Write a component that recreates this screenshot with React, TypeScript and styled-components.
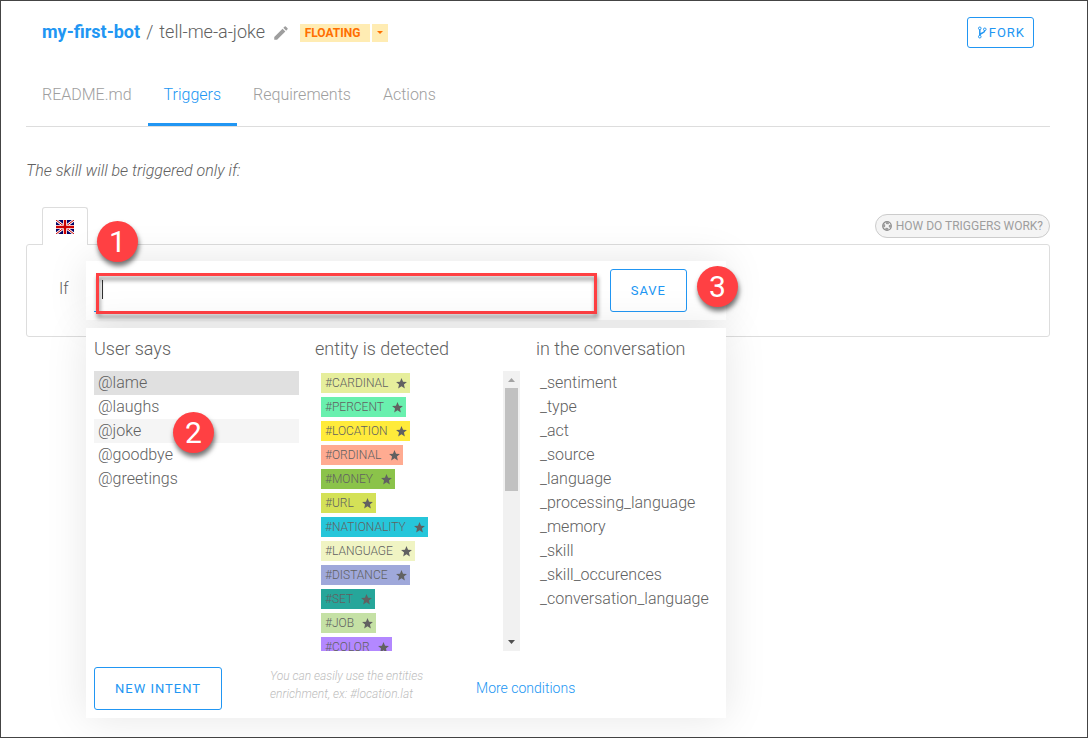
import React from "react";
import styled, { createGlobalStyle } from "styled-components";

const BLUE = "#2196f3";

const GlobalStyle = createGlobalStyle`
  *, *::before, *::after { box-sizing: border-box; }
  body {
    margin: 0;
    background: #fff;
    color: #616161;
    font-family: Roboto, "Liberation Sans", sans-serif;
    font-size: 16px;
    font-weight: 300;
  }
  button, input { font: inherit; color: inherit; }
  button { cursor: pointer; }
  h1, h2, p, ul { margin: 0; padding: 0; }
  ul { list-style: none; }
  a { text-decoration: none; }
`;

const Frame = styled.div`
  min-height: 100vh;
  padding: 16px 37px 18px 25px;
  border: 1px solid #444;
`;

const Header = styled.header`
  display: flex;
  justify-content: space-between;
  align-items: center;
  padding: 0 16px;
`;

const TitleGroup = styled.div`
  display: flex;
  align-items: center;
`;

const Title = styled.h1`
  display: flex;
  gap: 6px;
  margin-bottom: 2px;
  font-size: 18px;
  line-height: 22px;
  font-weight: 300;
`;

const BotLink = styled.a`
  color: ${BLUE};
  font-weight: 700;
`;

const IconButton = styled.button`
  display: flex;
  padding: 0;
  margin: 0 10px 0 7px;
  border: 0;
  background: none;
  color: #9e9e9e;
`;

const Status = styled.div`
  display: flex;
  gap: 2px;
`;

const StatusPart = styled.button<{ $caret?: boolean }>`
  display: flex;
  align-items: center;
  justify-content: center;
  width: ${(p) => (p.$caret ? "16px" : "70px")};
  height: 18px;
  padding: ${(p) => (p.$caret ? "0" : "0 5px 0 0")};
  border: 0;
  background: #ffecb3;
  color: #ff6f00;
  font-size: 12px;
  font-weight: 700;
`;

const OutlineButton = styled.button<{ $small?: boolean }>`
  display: flex;
  align-items: center;
  height: ${(p) => (p.$small ? "31px" : "43px")};
  padding: ${(p) => (p.$small ? "0 8px 0 9px" : "0 20px")};
  border: 1px solid ${BLUE};
  border-radius: 3px;
  background: #fff;
  color: ${BLUE};
  font-size: 13px;
  font-weight: 400;
  letter-spacing: 1px;
  white-space: nowrap;
`;

const Tabs = styled.nav`
  display: flex;
  margin-top: 18px;
  border-bottom: 1px solid #ddd;
`;

const Tab = styled.a<{ $active?: boolean }>`
  padding: 0 16px;
  border-bottom: 3px solid ${(p) => (p.$active ? BLUE : "transparent")};
  color: ${(p) => (p.$active ? BLUE : "#9e9e9e")};
  line-height: 57px;
`;

const Intro = styled.p`
  margin-top: 33px;
  font-style: italic;
  line-height: 22px;
`;

const PanelTop = styled.div`
  display: flex;
  justify-content: space-between;
  height: 37px;
  margin-top: 25px;
  padding-left: 16px;
`;

const LanguageTab = styled.button`
  position: relative;
  z-index: 1;
  display: flex;
  align-items: center;
  justify-content: center;
  width: 46px;
  height: 38px;
  padding: 0;
  border: 1px solid #ddd;
  border-bottom: 0;
  border-radius: 3px 3px 0 0;
  background: #fff;
`;

const HelpButton = styled.button`
  display: flex;
  align-items: center;
  gap: 4px;
  height: 24px;
  margin-top: 7px;
  padding: 0 6px;
  border: 1px solid #ccc;
  border-radius: 12px;
  background: #f4f4f4;
  color: #9e9e9e;
  font-size: 12px;
  font-weight: 400;
`;

const Panel = styled.section`
  position: relative;
  min-height: 93px;
  padding: 34px 32px;
  border: 1px solid #ddd;
  border-radius: 3px;
  line-height: 20px;
`;

const Editor = styled.div`
  position: absolute;
  z-index: 2;
  top: 16px;
  left: 59px;
  width: 640px;
  display: flex;
  flex-direction: column;
  gap: 8px;
`;

const SearchBar = styled.form`
  display: flex;
  gap: 16px;
  padding: 8px 39px 8px 8px;
  background: #fff;
  box-shadow: 0 0 40px rgba(0, 0, 0, 0.1);
`;

const Field = styled.div`
  position: relative;
  flex: 1;
  display: flex;
`;

const ConditionInput = styled.input`
  flex: 1;
  min-width: 0;
  padding: 0 8px;
  border: 0;
  border-bottom: 1px solid ${BLUE};
  outline: 0;
  background: transparent;
`;

const Caret = styled.span`
  position: absolute;
  left: 8px;
  top: 11px;
  width: 1px;
  height: 19px;
  background: #333;
`;

const Highlight = styled.div`
  position: absolute;
  inset: 4px -3px -2px 2px;
  border: 3px solid #ff4043;
  filter: drop-shadow(1px 4px 2px rgba(0, 0, 0, 0.45));
  pointer-events: none;
`;

const Suggestions = styled.div`
  position: relative;
  padding: 8px;
  background: #fff;
  box-shadow: 0 0 40px rgba(0, 0, 0, 0.1);
`;

const Columns = styled.div`
  display: grid;
  grid-template-columns: 205px 205px 1fr;
  gap: 16px;
`;

const ColumnTitle = styled.h2`
  margin-bottom: 9px;
  font-size: 18px;
  font-weight: 300;
  line-height: 26px;
`;

const Item = styled.li<{ $tone?: string }>`
  padding: 0 4px;
  background: ${(p) => p.$tone || "transparent"};
  line-height: 24px;
`;

const EntityBox = styled.div`
  display: flex;
  justify-content: space-between;
  height: 280px;
`;

const EntityList = styled.ul`
  display: flex;
  flex-direction: column;
  align-items: flex-start;
  gap: 4px;
  flex: 1;
  padding: 2px 6px 0;
  overflow: hidden;
`;

const Entity = styled.li<{ $color: string }>`
  flex: none;
  display: flex;
  align-items: center;
  gap: 7px;
  height: 20px;
  padding: 0 2px 0 4px;
  background: ${(p) => p.$color};
  font-size: 12px;
`;

const ScrollTrack = styled.div`
  display: flex;
  flex-direction: column;
  justify-content: space-between;
  align-items: center;
  width: 17px;
  background: #f1f1f1;
`;

const ScrollTop = styled.div`
  display: flex;
  flex-direction: column;
  align-items: center;
`;

const ScrollArrow = styled.svg`
  display: block;
  width: 17px;
  height: 17px;
`;

const Thumb = styled.div`
  width: 13px;
  height: 103px;
  background: #c1c1c1;
`;

const Footer = styled.footer`
  display: flex;
  align-items: flex-start;
  gap: 48px;
  margin-top: 16px;
`;

const Hint = styled.p`
  width: 158px;
  color: #bdbdbd;
  font-size: 12px;
  font-style: italic;
  line-height: 18px;
`;

const MoreLink = styled.a`
  color: ${BLUE};
  font-size: 14px;
  line-height: 42px;
`;

const Marker = styled.span<{ $x: number; $y: number }>`
  position: absolute;
  left: ${(p) => p.$x}px;
  top: ${(p) => p.$y}px;
  display: flex;
  align-items: center;
  justify-content: center;
  width: 41px;
  height: 41px;
  border-radius: 50%;
  background: #ff4043;
  box-shadow: 1px 4px 5px rgba(0, 0, 0, 0.55);
  color: #fff;
  font-size: 30px;
  font-weight: 400;
`;

const Pencil = () => (
  <svg width="18" height="18" viewBox="0 0 24 24" fill="currentColor" aria-hidden="true">
    <path d="M3 17.25V21h3.75L17.81 9.94l-3.75-3.75L3 17.25zM20.71 7.04a1 1 0 0 0 0-1.41l-2.34-2.34a1 1 0 0 0-1.41 0l-1.83 1.83 3.75 3.75 1.83-1.83z" />
  </svg>
);

const ForkIcon = () => (
  <svg width="12" height="13" viewBox="0 0 12 13" fill="none" stroke="currentColor" aria-hidden="true">
    <circle cx="2.8" cy="2.3" r="1.3" />
    <circle cx="2.8" cy="10.7" r="1.3" />
    <circle cx="7.8" cy="3.3" r="1.3" />
    <path d="M2.8 3.6v5.8M7.8 4.6c0 3-4.3 1.8-5 4.4" strokeWidth="1.5" />
  </svg>
);

const HelpIcon = () => (
  <svg width="10" height="10" viewBox="0 0 10 10" aria-hidden="true">
    <circle cx="5" cy="5" r="4.3" fill="none" stroke="#8c8c8c" strokeWidth="1.2" />
    <circle cx="5" cy="5" r="2.9" fill="none" stroke="#9a9a9a" strokeWidth="2" strokeDasharray="3.1 1.455" strokeDashoffset="1.55" />
  </svg>
);

const Flag = () => (
  <svg width="18" height="14" viewBox="0 0 18 14" role="img" aria-label="English">
    <path fill="#006" d="M0 0h18v14H0z" />
    <path d="M0 0l18 14M18 0L0 14" stroke="#fff" strokeWidth="2.6" />
    <path d="M0 0l18 14M18 0L0 14" stroke="#c00" strokeWidth="1" />
    <path d="M9 0v14M0 7h18" stroke="#fff" strokeWidth="4" />
    <path d="M9 0v14M0 7h18" stroke="#c00" strokeWidth="2.4" />
  </svg>
);

const Star = () => (
  <svg width="13" height="13" viewBox="0 0 24 24" fill="#616161" aria-hidden="true">
    <path d="M12 17.27L18.18 21l-1.64-7.03L22 9.24l-7.19-.61L12 2 9.19 8.63 2 9.24l5.46 4.73L5.82 21z" />
  </svg>
);

const tabs = ["README.md", "Triggers", "Requirements", "Actions"];

const intents = [
  { name: "@lame", tone: "#e0e0e0" },
  { name: "@laughs" },
  { name: "@joke", tone: "#f5f5f5" },
  { name: "@goodbye" },
  { name: "@greetings" },
];

const entities = [
  ["#CARDINAL", "#e6ee9c"],
  ["#PERCENT", "#69f0ae"],
  ["#LOCATION", "#ffeb3b"],
  ["#ORDINAL", "#ffab91"],
  ["#MONEY", "#8bc34a"],
  ["#URL", "#d4e157"],
  ["#NATIONALITY", "#26c6da"],
  ["#LANGUAGE", "#f0f4c3"],
  ["#DISTANCE", "#9fa8da"],
  ["#SET", "#26a69a"],
  ["#JOB", "#c5e1a5"],
  ["#COLOR", "#b388ff"],
];

const variables = [
  "_sentiment",
  "_type",
  "_act",
  "_source",
  "_language",
  "_processing_language",
  "_memory",
  "_skill",
  "_skill_occurences",
  "_conversation_language",
];

export default function App() {
  return (
    <>
      <GlobalStyle />
      <Frame>
        <Header>
          <TitleGroup>
            <Title>
              <BotLink href="#bot">my-first-bot</BotLink>
              <span>/</span>
              <span>tell-me-a-joke</span>
            </Title>
            <IconButton type="button" aria-label="Rename skill">
              <Pencil />
            </IconButton>
            <Status>
              <StatusPart type="button">FLOATING</StatusPart>
              <StatusPart type="button" $caret aria-label="Change status">
                <svg width="6" height="3" viewBox="0 0 6 3" fill="currentColor" aria-hidden="true">
                  <path d="M0 0h6L3 3z" />
                </svg>
              </StatusPart>
            </Status>
          </TitleGroup>
          <OutlineButton type="button" $small>
            <ForkIcon />
            FORK
          </OutlineButton>
        </Header>

        <Tabs>
          {tabs.map((t) => (
            <Tab key={t} href={`#${t}`} $active={t === "Triggers"}>
              {t}
            </Tab>
          ))}
        </Tabs>

        <main>
          <Intro>The skill will be triggered only if:</Intro>
          <PanelTop>
            <LanguageTab type="button">
              <Flag />
            </LanguageTab>
            <HelpButton type="button">
              <HelpIcon />
              HOW DO TRIGGERS WORK?
            </HelpButton>
          </PanelTop>
          <Panel>
            <label htmlFor="condition">If</label>
            <Editor>
              <SearchBar onSubmit={(e) => e.preventDefault()}>
                <Field>
                  <ConditionInput id="condition" type="text" autoComplete="off" />
                  <Caret />
                  <Highlight />
                </Field>
                <OutlineButton type="submit">SAVE</OutlineButton>
              </SearchBar>
              <Suggestions>
                <Columns>
                  <div>
                    <ColumnTitle>User says</ColumnTitle>
                    <ul>
                      {intents.map((i) => (
                        <Item key={i.name} $tone={i.tone}>
                          {i.name}
                        </Item>
                      ))}
                    </ul>
                  </div>
                  <div>
                    <ColumnTitle>entity is detected</ColumnTitle>
                    <EntityBox>
                      <EntityList>
                        {entities.map(([name, color]) => (
                          <Entity key={name} $color={color}>
                            {name}
                            <Star />
                          </Entity>
                        ))}
                      </EntityList>
                      <ScrollTrack>
                        <ScrollTop>
                          <ScrollArrow viewBox="0 0 17 17">
                            <path d="M5 11h7L8.5 7z" fill="#a3a3a3" />
                          </ScrollArrow>
                          <Thumb />
                        </ScrollTop>
                        <ScrollArrow viewBox="0 0 17 17">
                          <path d="M5 6h7l-3.5 4z" fill="#505050" />
                        </ScrollArrow>
                      </ScrollTrack>
                    </EntityBox>
                  </div>
                  <div>
                    <ColumnTitle>in the conversation</ColumnTitle>
                    <ul>
                      {variables.map((v) => (
                        <Item key={v}>{v}</Item>
                      ))}
                    </ul>
                  </div>
                </Columns>
                <Footer>
                  <OutlineButton type="button">NEW INTENT</OutlineButton>
                  <Hint>You can easily use the entities enrichment, ex: #location.lat</Hint>
                  <MoreLink href="#more">More conditions</MoreLink>
                </Footer>
              </Suggestions>
              <Marker $x={11} $y={-40}>1</Marker>
              <Marker $x={87} $y={151}>2</Marker>
              <Marker $x={611} $y={5}>3</Marker>
            </Editor>
          </Panel>
        </main>
      </Frame>
    </>
  );
}
